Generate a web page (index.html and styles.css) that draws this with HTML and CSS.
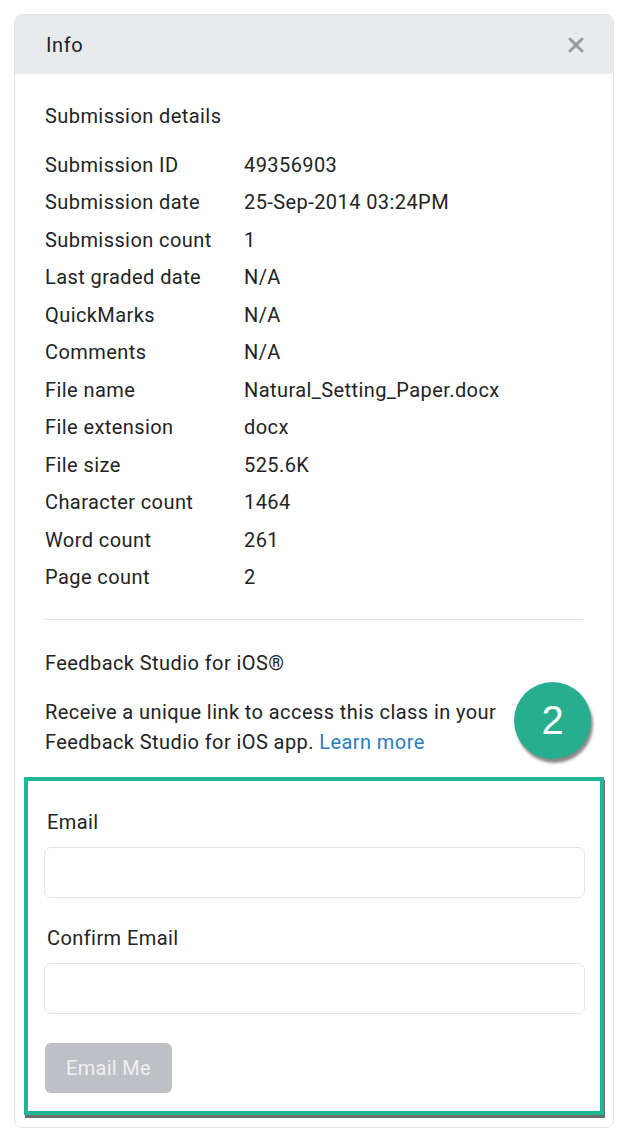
FILE: index.html
```html
<!DOCTYPE html>
<html lang="en">
<head>
<meta charset="utf-8">
<title>Info</title>
<link rel="stylesheet" href="styles.css">
</head>
<body>
<div class="card">
  <div class="header">
    <span class="header-title">Info</span>
    <svg class="close" width="16" height="16" viewBox="0 0 16 16" aria-label="Close">
      <path d="M2 2 L14 14 M14 2 L2 14" stroke="#9b9b9b" stroke-width="3" stroke-linecap="round"/>
    </svg>
  </div>
  <div class="content">
    <div class="section-title">Submission details</div>
    <dl class="details">
      <dt>Submission ID</dt><dd>49356903</dd>
      <dt>Submission date</dt><dd>25-Sep-2014 03:24PM</dd>
      <dt>Submission count</dt><dd>1</dd>
      <dt>Last graded date</dt><dd>N/A</dd>
      <dt>QuickMarks</dt><dd>N/A</dd>
      <dt>Comments</dt><dd>N/A</dd>
      <dt>File name</dt><dd>Natural_Setting_Paper.docx</dd>
      <dt>File extension</dt><dd>docx</dd>
      <dt>File size</dt><dd>525.6K</dd>
      <dt>Character count</dt><dd>1464</dd>
      <dt>Word count</dt><dd>261</dd>
      <dt>Page count</dt><dd>2</dd>
    </dl>
    <div class="divider"></div>
    <div class="ios-title">Feedback Studio for iOS®</div>
    <p class="ios-text"><span>Receive a unique link to access this class in your</span><br><span>Feedback Studio for iOS app.</span> <a class="link" href="#">Learn more</a></p>
  </div>
  <div class="form-box">
    <label class="field-label">Email</label>
    <div class="input"></div>
    <label class="field-label second">Confirm Email</label>
    <div class="input"></div>
    <button class="btn" type="button">Email Me</button>
  </div>
  <div class="badge">2</div>
</div>
</body>
</html>
```
FILE: styles.css
```css
html, body {
  margin: 0;
  padding: 0;
  background: #ffffff;
}
body {
  font-family: Roboto, "Liberation Sans", Arial, sans-serif;
  color: #222325;
  font-size: 20px;
  letter-spacing: 0.42px;
}
.card {
  position: relative;
  margin: 14px 0 0 14px;
  width: 600px;
  border: 1px solid #e4e4e4;
  border-radius: 8px;
  padding-bottom: 12px;
  box-sizing: border-box;
}
.header {
  height: 59px;
  background: #e9eaec;
  border-radius: 7px 7px 0 0;
  display: flex;
  align-items: center;
  justify-content: space-between;
  padding: 0 29px 0 31px;
}
.header-title {
  font-size: 20px;
  letter-spacing: 0.6px;
}
.close {
  display: block;
}
.content {
  padding: 24px 30px 0 30px;
}
.section-title {
  line-height: 37.5px;
  margin-bottom: 11px;
}
.details {
  display: grid;
  grid-template-columns: 199px 1fr;
  margin: 0;
  line-height: 37.5px;
}
.details dt, .details dd {
  margin: 0;
}
.divider {
  height: 1px;
  background: #e3e3e3;
  margin-top: 22px;
  margin-left: -1px;
}
.ios-title {
  line-height: 30px;
  margin-top: 28px;
}
.ios-text {
  margin: 19px 0 0 0;
  line-height: 30px;
  max-width: 468px;
}
.link {
  color: #2a7cbc;
  text-decoration: none;
}
.form-box {
  margin: 20px 0 0 9px;
  width: 580px;
  box-sizing: border-box;
  border: 4px solid #1fb597;
  box-shadow: 1px 3px 0 rgba(60, 60, 60, 0.75);
  padding: 26px 15px 18px 16px;
  display: flex;
  flex-direction: column;
  align-items: flex-start;
}
.field-label {
  display: block;
  line-height: 30px;
  padding-left: 3px;
}
.field-label.second {
  margin-top: 25px;
}
.input {
  align-self: stretch;
  height: 51px;
  box-sizing: border-box;
  border: 1px solid #e4e4e4;
  border-radius: 7px;
  margin-top: 10px;
  background: #fff;
}
.btn {
  margin-top: 29px;
  margin-left: 1px;
  width: 127px;
  height: 50px;
  border: none;
  border-radius: 6px;
  background: #bfc0c5;
  color: #eff0f2;
  font-family: Roboto, "Liberation Sans", Arial, sans-serif;
  font-size: 20px;
  letter-spacing: 0.3px;
  padding: 0;
}
.badge {
  position: absolute;
  left: 499px;
  top: 667px;
  width: 77px;
  height: 77px;
  border-radius: 50%;
  background: #27ae8e;
  box-shadow: 2px 4px 3px rgba(40, 40, 40, 0.55);
  color: #ffffff;
  font-family: "Liberation Sans", Arial, sans-serif;
  font-size: 40px;
  letter-spacing: 0;
  display: flex;
  align-items: center;
  justify-content: center;
}
```
